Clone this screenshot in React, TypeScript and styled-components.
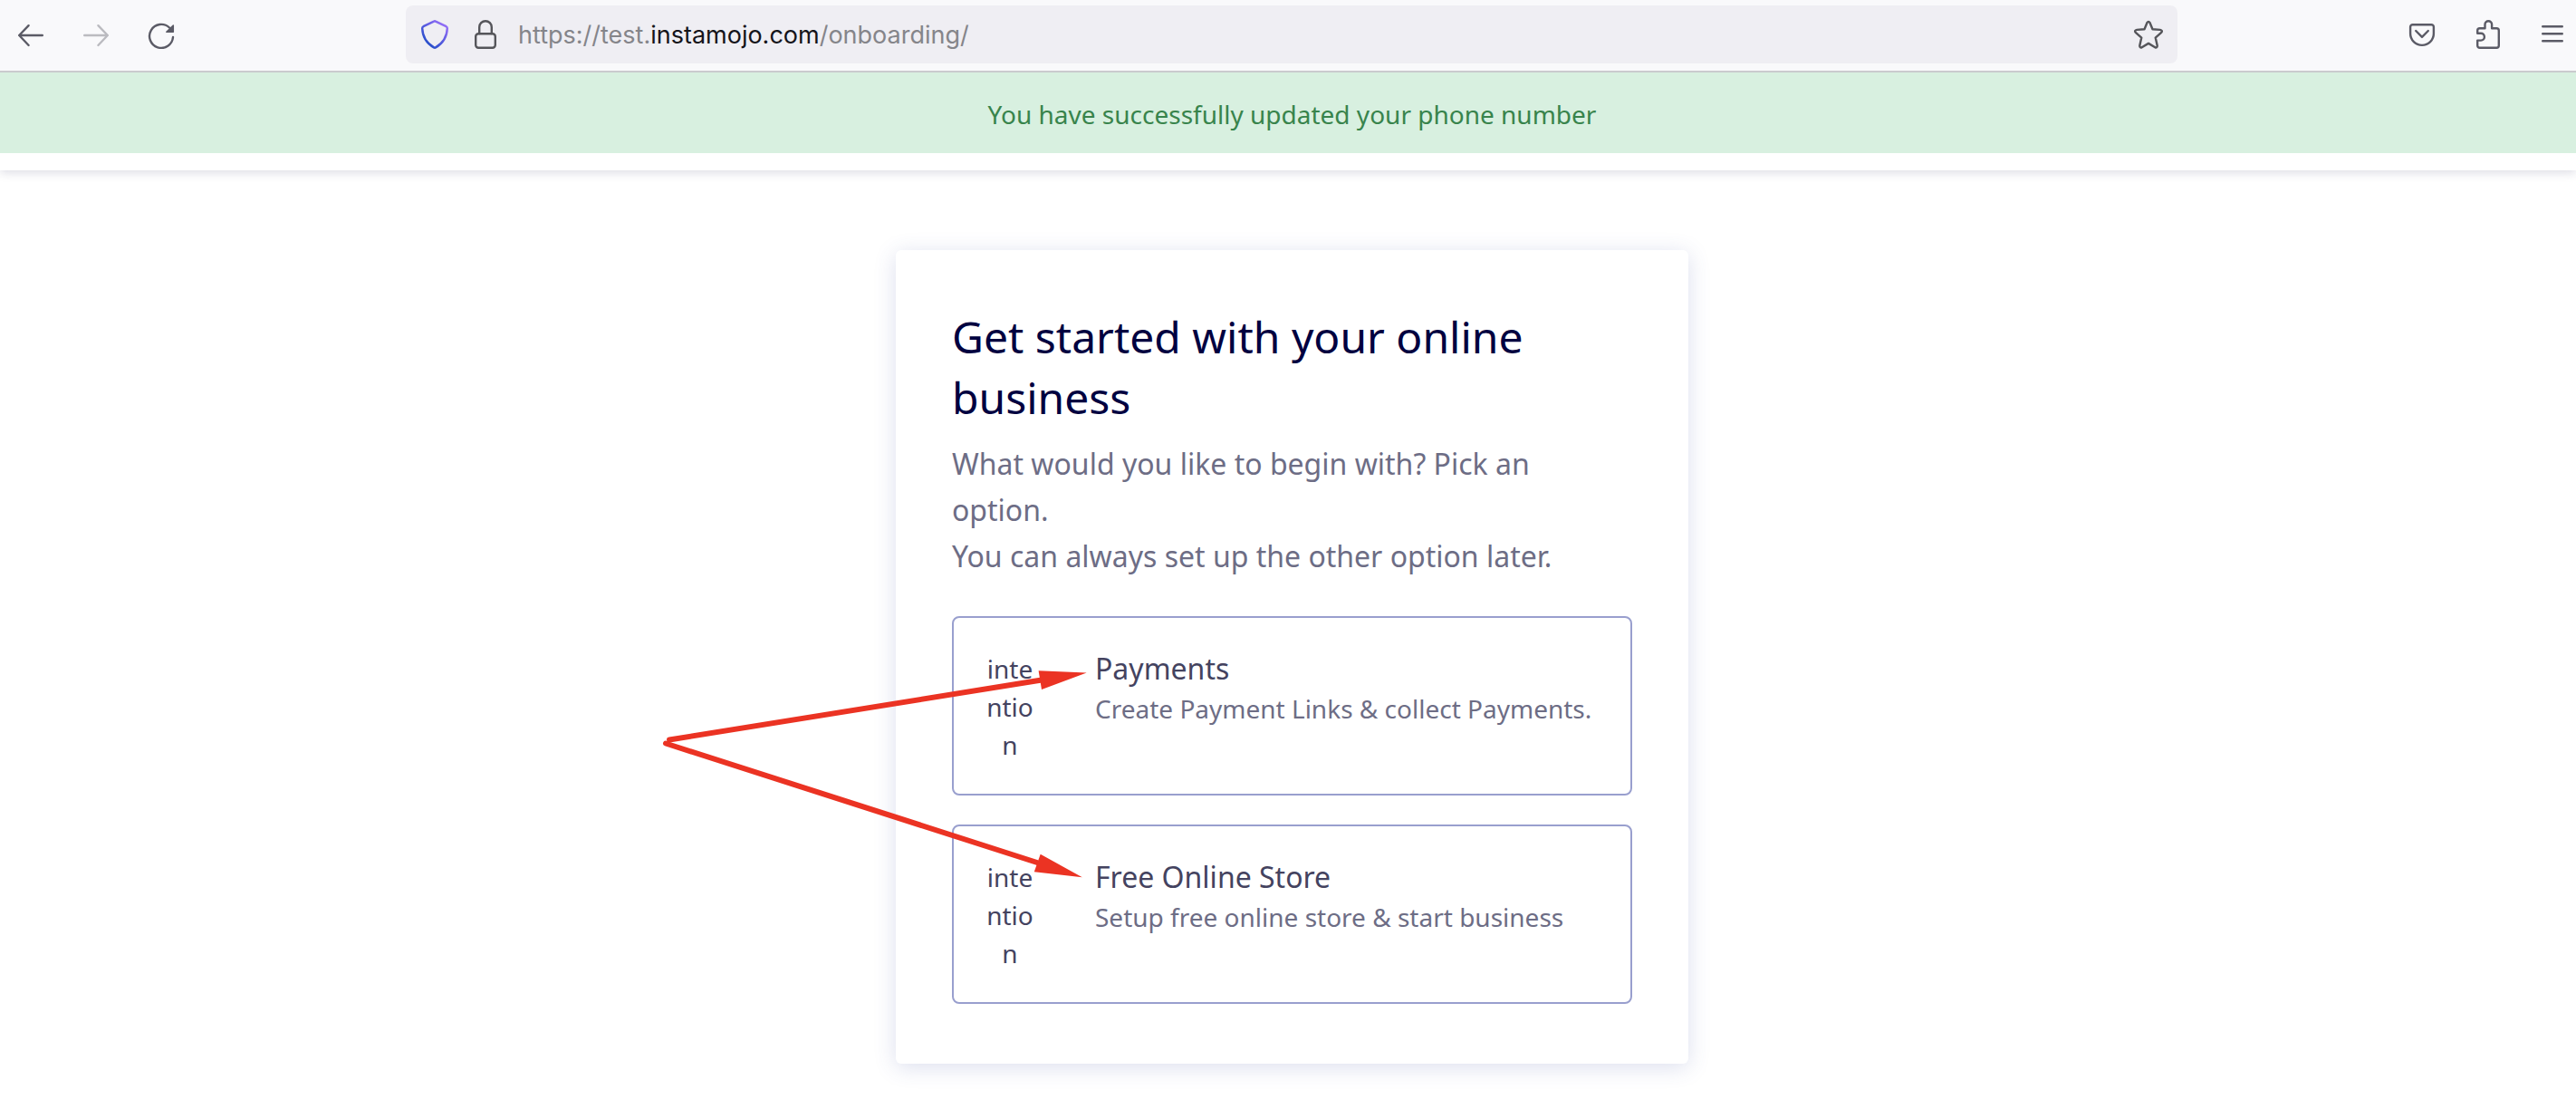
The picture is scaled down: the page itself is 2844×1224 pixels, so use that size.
import React, { useState } from "react";
import styled, { createGlobalStyle } from "styled-components";

const GlobalStyle = createGlobalStyle`
  *, *::before, *::after { box-sizing: border-box; }
  body {
    margin: 0;
    background: #ffffff;
    font-family: "Noto Sans", "Open Sans", sans-serif;
    color: #44435f;
  }
  h1, h2, p { margin: 0; font-weight: 400; }
  button { font: inherit; }
`;

const Toolbar = styled.header`
  display: flex;
  align-items: center;
  padding: 6px 0 8px 8px;
  background: #f9f9fb;
  border-bottom: 2px solid #cacace;
`;

const ToolGroup = styled.div`
  display: flex;
  gap: 20px;
`;

const ToolButton = styled.button`
  display: flex;
  align-items: center;
  justify-content: center;
  width: 52px;
  height: 64px;
  padding: 0;
  border: 0;
  background: none;
  color: #5b5b66;

  &:disabled {
    color: #bbbbc0;
  }
`;

const AddressBar = styled.div`
  flex: 1;
  display: flex;
  align-items: center;
  gap: 24px;
  min-width: 0;
  height: 64px;
  margin: 0 min(244px, 9vw);
  padding: 0 16px;
  border-radius: 8px;
  background: #efeef3;
`;

const AddressButton = styled.button`
  display: flex;
  padding: 0;
  border: 0;
  background: none;
  color: #55555a;
`;

const AddressField = styled.div`
  flex: 1;
  display: grid;
  align-items: center;
  min-width: 0;
  margin-left: -4px;
  padding-top: 2px;
  font: 400 27px/40px Inter, "Liberation Sans", sans-serif;

  & > * {
    grid-area: 1 / 1;
  }
`;

const AddressInput = styled.input`
  width: 100%;
  padding: 0;
  border: 0;
  outline: 0;
  background: none;
  font: inherit;
  color: #15141a;
`;

const AddressLabel = styled.label`
  overflow: hidden;
  white-space: nowrap;
  color: #85858a;
  cursor: text;

  strong {
    font-weight: 400;
    color: #15141a;
  }
`;

const Icon = styled.svg`
  display: block;
  width: 32px;
  height: 32px;
  fill: none;
  stroke: currentColor;
  stroke-width: 2.4;
  stroke-linecap: round;
  stroke-linejoin: round;
`;

const Alert = styled.div`
  position: relative;
  padding: 25px 0 22px 9px;
  background: #d8f0e0;
  color: #38844c;
  font-size: 28px;
  line-height: 42px;
  text-align: center;
`;

const NavStrip = styled.div`
  height: 19px;
  background: #ffffff;
  box-shadow: 0 2px 12px rgba(40, 40, 90, 0.18);
`;

const Main = styled.main`
  display: flex;
  justify-content: center;
  padding: 88px 0 48px 9px;
`;

const Card = styled.section`
  position: relative;
  width: 875px;
  max-width: 100%;
  padding: 62px 62px 66px;
  border-radius: 6px;
  background: #ffffff;
  box-shadow: 0 4px 24px rgba(60, 80, 160, 0.18);
`;

const Title = styled.h1`
  font-size: 48px;
  line-height: 67px;
  color: #000040;
`;

const Intro = styled.p`
  margin: 14px 0 41px;
  font-size: 32px;
  line-height: 51px;
  color: #6d6d85;
`;

const Options = styled.div`
  display: grid;
  gap: 32px;
`;

const Option = styled.button`
  display: flex;
  align-items: flex-start;
  gap: 64px;
  padding: 35px 32px 33px;
  border: 2px solid #999fce;
  border-radius: 8px;
  background: none;
  color: #44435f;
  text-align: left;
  cursor: pointer;
`;

const OptionImageText = styled.span`
  flex: none;
  width: 60px;
  font-size: 28px;
  line-height: 42px;
  text-align: center;
  word-break: break-all;
`;

const OptionBody = styled.span`
  display: grid;
  gap: 2px;
`;

const OptionTitle = styled.span`
  font-size: 32px;
  line-height: 42px;
`;

const OptionText = styled.span`
  font-size: 28px;
  line-height: 42px;
  white-space: nowrap;
  color: #6d6d85;
`;

const Arrows = styled.svg`
  position: absolute;
  left: -261px;
  top: 454px;
  width: 480px;
  height: 244px;
  pointer-events: none;
`;

const options = [
  { title: "Payments", text: "Create Payment Links & collect Payments." },
  { title: "Free Online Store", text: "Setup free online store & start business" },
];

function Address() {
  const [value, setValue] = useState("https://test.instamojo.com/onboarding/");
  const [editing, setEditing] = useState(false);
  return (
    <AddressBar>
      <AddressButton aria-label="Tracking protection">
        <Icon viewBox="0 0 32 32">
          <defs>
            <linearGradient id="shield" x1="0.8" y1="0.1" x2="0.2" y2="0.8">
              <stop offset="0" stopColor="#8f6cf5" />
              <stop offset="0.5" stopColor="#5a5be0" />
              <stop offset="1" stopColor="#2c50cc" />
            </linearGradient>
          </defs>
          <path
            stroke="url(#shield)"
            d="M15 1.6Q16 1 17 1.6L28.6 7.2Q29.9 7.9 29.8 9.4C29.4 19.5 25.5 25.5 17 30.4Q16 31 15 30.4C6.5 25.5 2.6 19.5 2.2 9.4Q2.1 7.9 3.4 7.2Z"
          />
        </Icon>
      </AddressButton>
      <AddressButton aria-label="Site information">
        <Icon viewBox="0 0 32 32">
          <rect x="5.2" y="15.2" width="21.6" height="15.6" rx="3" />
          <path d="M9.2 15V8a6.8 6.8 0 0 1 13.6 0v7" />
        </Icon>
      </AddressButton>
      <AddressField>
        <AddressInput
          id="address"
          value={editing ? value : ""}
          onChange={(e) => setValue(e.target.value)}
          onFocus={() => setEditing(true)}
          onBlur={() => setEditing(false)}
        />
        {!editing && (
          <AddressLabel htmlFor="address">
            https://test.<strong>instamojo.com</strong>/onboarding/
          </AddressLabel>
        )}
      </AddressField>
      <AddressButton aria-label="Bookmark this page">
        <Icon viewBox="0 0 32 32">
          <path d="M14.5 3Q16 .8 17.5 3L20.5 10.2L28.8 10.9Q32 11.5 30.2 13.9L23.7 19.6L25.7 28.3Q25.8 31 23.3 30.3L16 25.9L8.7 30.3Q6.2 31 6.3 28.3L8.3 19.6L1.8 13.9Q0 11.5 3.2 10.9L11.5 10.2Z" />
        </Icon>
      </AddressButton>
    </AddressBar>
  );
}

export default function App() {
  return (
    <>
      <GlobalStyle />
      <Toolbar>
        <ToolGroup>
          <ToolButton aria-label="Back">
            <Icon viewBox="0 0 32 32">
              <path d="M3.2 17H28.8M13.6 6.2L3.2 17L13.6 28" />
            </Icon>
          </ToolButton>
          <ToolButton aria-label="Forward" disabled>
            <Icon viewBox="0 0 32 32">
              <path d="M3.2 17H28.8M18.4 6.2L28.8 17L18.4 28" />
            </Icon>
          </ToolButton>
          <ToolButton aria-label="Reload">
            <Icon viewBox="0 0 32 32">
              <path d="M29 19A13 13 0 1 1 25 8.5" />
              <path d="M29.3 6V13.2H21.8Z" fill="currentColor" strokeWidth="1.5" />
            </Icon>
          </ToolButton>
        </ToolGroup>
        <Address />
        <ToolGroup>
          <ToolButton aria-label="Save to Pocket">
            <Icon viewBox="0 0 32 32">
              <path d="M5.7 5.2H26.3A2.6 2.6 0 0 1 28.9 7.8V15A12.9 12.9 0 0 1 3.1 15V7.8A2.6 2.6 0 0 1 5.7 5.2Z" />
              <path d="M9.2 12L16 18.9L22.8 12" />
            </Icon>
          </ToolButton>
          <ToolButton aria-label="Extensions">
            <Icon viewBox="0 0 32 32">
              <path d="M7.7 9.2H13.5V5a3.8 3.8 0 0 1 7.6 0V9.2H26.3a2.5 2.5 0 0 1 2.5 2.5V28.3a2.5 2.5 0 0 1-2.5 2.5H7.7a2.5 2.5 0 0 1-2.5-2.5V22.6H9a3.9 3.9 0 0 0 0-7.8H5.2V11.7a2.5 2.5 0 0 1 2.5-2.5Z" />
            </Icon>
          </ToolButton>
          <ToolButton aria-label="Menu">
            <Icon viewBox="0 0 32 32">
              <path d="M5.2 7.2H26.8M5.2 15.2H26.8M5.2 23.2H26.8" />
            </Icon>
          </ToolButton>
        </ToolGroup>
      </Toolbar>
      <Alert role="status">You have successfully updated your phone number</Alert>
      <NavStrip />
      <Main>
        <Card>
          <Title>Get started with your online business</Title>
          <Intro>
            What would you like to begin with? Pick an option.
            <br />
            You can always set up the other option later.
          </Intro>
          <Options>
            {options.map((option) => (
              <Option key={option.title}>
                <OptionImageText>intention</OptionImageText>
                <OptionBody>
                  <OptionTitle>{option.title}</OptionTitle>
                  <OptionText>{option.text}</OptionText>
                </OptionBody>
              </Option>
            ))}
          </Options>
          <Arrows viewBox="0 0 480 244" aria-hidden="true">
            <g stroke="#eb3323" strokeWidth="6" strokeLinecap="round">
              <path d="M11 86.5L422 20.5" />
              <path d="M7 90.5L417 222" />
            </g>
            <g fill="#eb3323">
              <path d="M418.6 10.3L471.7 12.5L422 31Z" />
              <path d="M420.7 212.7L466.8 238.3L413.8 232.3Z" />
            </g>
          </Arrows>
        </Card>
      </Main>
    </>
  );
}
